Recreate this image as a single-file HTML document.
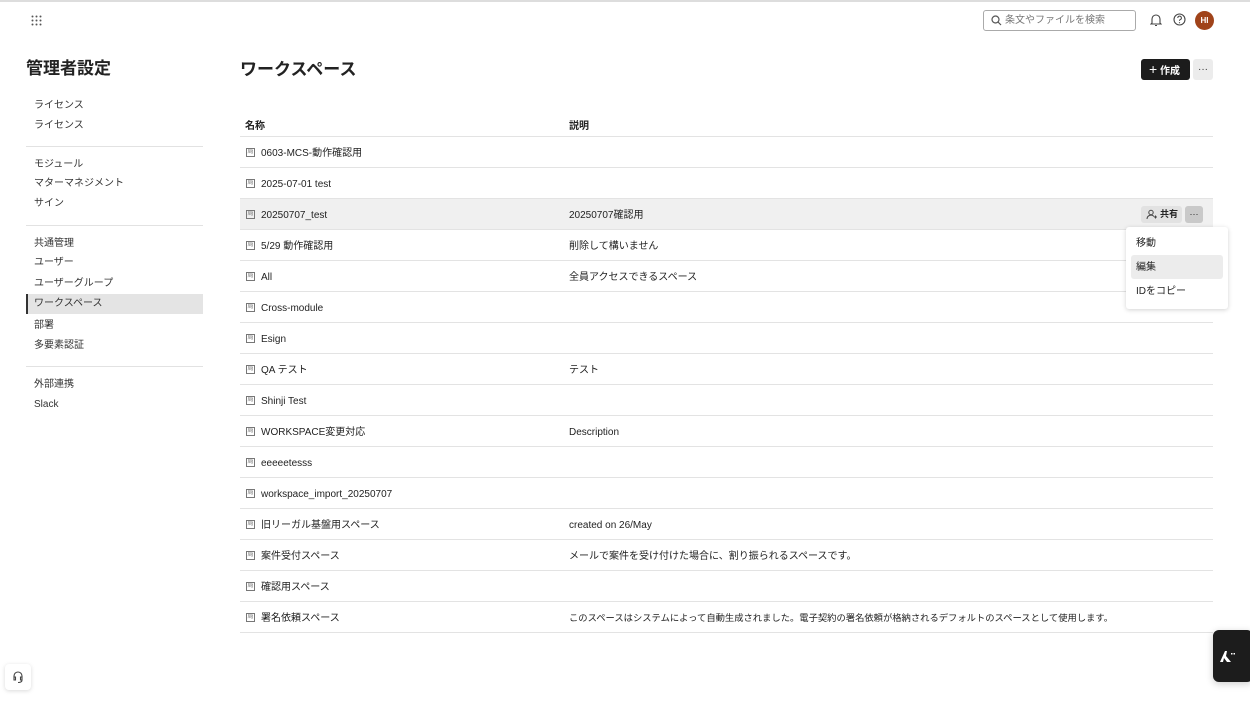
<!DOCTYPE html><html><head><meta charset="utf-8"><style>
*{box-sizing:border-box;margin:0;padding:0}
body{width:1250px;height:703px;overflow:hidden;background:#fff;font-family:"Liberation Sans","Noto Sans CJK JP",sans-serif;color:#222;position:relative}
.a{position:absolute}
.nav{font-size:10px;color:#333;left:34px;line-height:12px}
.sep{left:26px;width:177px;height:1px;background:#e2e2e2}
.row{left:240px;width:973px;height:31px;border-bottom:1px solid #e3e3e3;font-size:10px}
.row span{position:absolute;top:1px;line-height:31px;height:30px}
.ic{left:6px;top:11px!important;width:9px;height:9px!important;border:1px solid #777;font-size:6px;line-height:7px!important;text-align:center;color:#777;overflow:hidden}
.n{left:21px}.d{left:329px}
</style></head><body>
<div class="a" style="left:0;top:0;width:1250px;height:2px;background:#ddd"></div>
<svg class="a" style="left:31px;top:15px" width="11" height="11"><g fill="#555"><circle cx="1.5" cy="1.5" r="1"/><circle cx="5.5" cy="1.5" r="1"/><circle cx="9.5" cy="1.5" r="1"/><circle cx="1.5" cy="5.5" r="1"/><circle cx="5.5" cy="5.5" r="1"/><circle cx="9.5" cy="5.5" r="1"/><circle cx="1.5" cy="9.5" r="1"/><circle cx="5.5" cy="9.5" r="1"/><circle cx="9.5" cy="9.5" r="1"/></g></svg>
<div class="a" style="left:983px;top:10px;width:153px;height:21px;border:1px solid #aaa;border-radius:3px;font-size:10px;color:#777;padding-left:21px;line-height:19px">条文やファイルを検索</div>
<svg class="a" style="left:991px;top:15px" width="11" height="11"><circle cx="4.5" cy="4.5" r="3.5" fill="none" stroke="#555" stroke-width="1.2"/><line x1="7" y1="7" x2="10" y2="10" stroke="#555" stroke-width="1.2"/></svg>
<svg class="a" style="left:1150px;top:13px" width="12" height="14"><path d="M2 10V6a4 4 0 0 1 8 0v4l1 1H1z M5 12.5h2" fill="none" stroke="#444" stroke-width="1.1"/></svg>
<svg class="a" style="left:1173px;top:13px" width="13" height="13"><circle cx="6.5" cy="6.5" r="5.5" fill="none" stroke="#444" stroke-width="1.1"/><path d="M4.8 5a1.8 1.8 0 1 1 2.4 1.6c-.6.3-.7.7-.7 1.3" fill="none" stroke="#444" stroke-width="1"/><circle cx="6.5" cy="9.7" r=".6" fill="#444"/></svg>
<div class="a" style="left:1195px;top:11px;width:19px;height:19px;border-radius:50%;background:#a0431a;color:#fff;font-size:8px;font-weight:bold;text-align:center;line-height:19px">HI</div>
<div class="a" style="left:26px;top:58px;font-size:17px;font-weight:bold;color:#222;line-height:22px">管理者設定</div>
<div class="a" style="left:240px;top:59px;font-size:17px;font-weight:bold;color:#222;line-height:22px">ワークスペース</div>
<div class="a" style="left:1141px;top:59px;width:49px;height:21px;background:#1c1c1c;border-radius:3px;color:#fff;font-size:10px;font-weight:bold;line-height:21px;padding-left:8px"><span style="font-size:14px;font-weight:normal">+</span> 作成</div>
<div class="a" style="left:1193px;top:59px;width:20px;height:21px;background:#ececec;border-radius:3px;text-align:center;font-size:10px;line-height:21px;color:#333">···</div>
<div class="a nav" style="top:100px">ライセンス</div>
<div class="a nav" style="top:120px">ライセンス</div>
<div class="a sep" style="top:146px"></div>
<div class="a nav" style="top:159px">モジュール</div>
<div class="a nav" style="top:178px">マターマネジメント</div>
<div class="a nav" style="top:198px">サイン</div>
<div class="a sep" style="top:225px"></div>
<div class="a nav" style="top:238px">共通管理</div>
<div class="a nav" style="top:257px">ユーザー</div>
<div class="a nav" style="top:278px">ユーザーグループ</div>
<div class="a" style="left:26px;top:294px;width:177px;height:20px;background:#e4e4e4;border-left:2px solid #333"></div>
<div class="a nav" style="top:298px">ワークスペース</div>
<div class="a nav" style="top:320px">部署</div>
<div class="a nav" style="top:340px">多要素認証</div>
<div class="a sep" style="top:366px"></div>
<div class="a nav" style="top:379px">外部連携</div>
<div class="a nav" style="top:399px">Slack</div>
<div class="a" style="left:245px;top:121px;font-size:10px;font-weight:bold;line-height:12px">名称</div>
<div class="a" style="left:569px;top:121px;font-size:10px;font-weight:bold;line-height:12px">説明</div>
<div class="a" style="left:240px;top:136px;width:973px;height:1px;background:#e3e3e3"></div>
<div class="a row" style="top:137px"><span class="ic">局</span><span class="n">0603-MCS-動作確認用</span></div>
<div class="a row" style="top:168px"><span class="ic">局</span><span class="n">2025-07-01 test</span></div>
<div class="a row" style="top:199px;background:#f0f0f0"><span class="ic">局</span><span class="n">20250707_test</span><span class="d">20250707確認用</span></div>
<div class="a row" style="top:230px"><span class="ic">局</span><span class="n">5/29 動作確認用</span><span class="d">削除して構いません</span></div>
<div class="a row" style="top:261px"><span class="ic">局</span><span class="n">All</span><span class="d">全員アクセスできるスペース</span></div>
<div class="a row" style="top:292px"><span class="ic">局</span><span class="n">Cross-module</span></div>
<div class="a row" style="top:323px"><span class="ic">局</span><span class="n">Esign</span></div>
<div class="a row" style="top:354px"><span class="ic">局</span><span class="n">QA テスト</span><span class="d">テスト</span></div>
<div class="a row" style="top:385px"><span class="ic">局</span><span class="n">Shinji Test</span></div>
<div class="a row" style="top:416px"><span class="ic">局</span><span class="n">WORKSPACE変更対応</span><span class="d">Description</span></div>
<div class="a row" style="top:447px"><span class="ic">局</span><span class="n">eeeeetesss</span></div>
<div class="a row" style="top:478px"><span class="ic">局</span><span class="n">workspace_import_20250707</span></div>
<div class="a row" style="top:509px"><span class="ic">局</span><span class="n">旧リーガル基盤用スペース</span><span class="d">created on 26/May</span></div>
<div class="a row" style="top:540px"><span class="ic">局</span><span class="n">案件受付スペース</span><span class="d">メールで案件を受け付けた場合に、割り振られるスペースです。</span></div>
<div class="a row" style="top:571px"><span class="ic">局</span><span class="n">確認用スペース</span></div>
<div class="a row" style="top:602px"><span class="ic">局</span><span class="n">署名依頼スペース</span><span class="d" style="font-size:9.3px">このスペースはシステムによって自動生成されました。電子契約の署名依頼が格納されるデフォルトのスペースとして使用します。</span></div>
<div class="a" style="left:1141px;top:206px;width:41px;height:17px;background:#e2e2e2;border-radius:3px;font-size:9px;font-weight:bold;line-height:17px;padding-left:19px">共有</div>
<svg class="a" style="left:1146px;top:209px" width="11" height="11"><circle cx="5" cy="3.5" r="2.2" fill="none" stroke="#444"/><path d="M1 10a4 4 0 0 1 7-2.5M8 8h3M9.5 6.5v3" fill="none" stroke="#444"/></svg>
<div class="a" style="left:1185px;top:206px;width:18px;height:17px;background:#c9c9c9;border-radius:3px;text-align:center;font-size:9px;line-height:17px">···</div>
<div class="a" style="left:1126px;top:227px;width:102px;height:82px;background:#fff;border-radius:3px;box-shadow:0 1px 5px rgba(0,0,0,.18)"></div>
<div class="a" style="left:1131px;top:255px;width:92px;height:24px;background:#ececec;border-radius:3px"></div>
<div class="a" style="left:1136px;top:238px;font-size:10px;line-height:12px">移動</div>
<div class="a" style="left:1136px;top:262px;font-size:10px;line-height:12px">編集</div>
<div class="a" style="left:1136px;top:286px;font-size:10px;line-height:12px">IDをコピー</div>
<div class="a" style="left:5px;top:664px;width:26px;height:26px;background:#fff;border-radius:4px;box-shadow:0 1px 4px rgba(0,0,0,.15)"></div>
<svg class="a" style="left:11px;top:670px" width="14" height="14"><path d="M3 8V6a4 4 0 0 1 8 0v2M3 7h1.5v3H3zM9.5 7H11v3H9.5zM11 10c0 2-2 2.5-4 2.5" fill="none" stroke="#444" stroke-width="1.1"/></svg>
<div class="a" style="left:1213px;top:630px;width:40px;height:52px;background:#1c1c1c;border-radius:6px;box-shadow:0 2px 8px rgba(0,0,0,.2)"></div>
<svg class="a" style="left:1219px;top:649px" width="18" height="14"><path d="M1 13L6 2h2l-1 5 5 6H8L5 9l-1 4z" fill="#fff"/><rect x="12" y="4" width="1.5" height="1.5" fill="#fff"/><rect x="14.5" y="4" width="1.5" height="1.5" fill="#fff"/></svg>
</body></html>
